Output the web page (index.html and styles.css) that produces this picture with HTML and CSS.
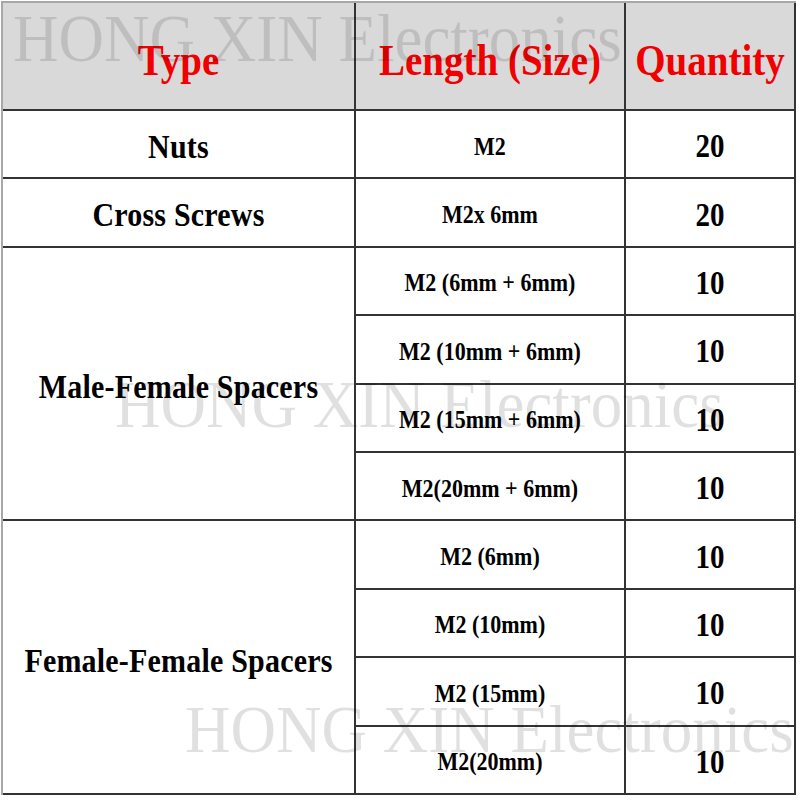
FILE: index.html
```html
<!DOCTYPE html>
<html>
<head>
<meta charset="utf-8">
<link rel="stylesheet" href="styles.css">
</head>
<body>
<div class="sheet">
  <div class="grid">
    <div class="cell head"><span class="t">Type</span></div>
    <div class="cell head"><span class="t">Length (Size)</span></div>
    <div class="cell head"><span class="t">Quantity</span></div>

    <div class="cell type"><span class="t">Nuts</span></div>
    <div class="cell len"><span class="t">M2</span></div>
    <div class="cell qty"><span class="t">20</span></div>

    <div class="cell type"><span class="t">Cross Screws</span></div>
    <div class="cell len"><span class="t">M2x 6mm</span></div>
    <div class="cell qty"><span class="t">20</span></div>

    <div class="cell type span4"><span class="t">Male-Female Spacers</span></div>
    <div class="cell len"><span class="t">M2 (6mm + 6mm)</span></div>
    <div class="cell qty"><span class="t">10</span></div>
    <div class="cell len"><span class="t">M2 (10mm + 6mm)</span></div>
    <div class="cell qty"><span class="t">10</span></div>
    <div class="cell len"><span class="t">M2 (15mm + 6mm)</span></div>
    <div class="cell qty"><span class="t">10</span></div>
    <div class="cell len"><span class="t">M2(20mm + 6mm)</span></div>
    <div class="cell qty"><span class="t">10</span></div>

    <div class="cell type span4"><span class="t">Female-Female Spacers</span></div>
    <div class="cell len"><span class="t">M2 (6mm)</span></div>
    <div class="cell qty"><span class="t">10</span></div>
    <div class="cell len"><span class="t">M2 (10mm)</span></div>
    <div class="cell qty"><span class="t">10</span></div>
    <div class="cell len"><span class="t">M2 (15mm)</span></div>
    <div class="cell qty"><span class="t">10</span></div>
    <div class="cell len"><span class="t">M2(20mm)</span></div>
    <div class="cell qty"><span class="t">10</span></div>
  </div>
  <div class="wm wm1">HONG XIN Electronics</div>
  <div class="wm wm2">HONG XIN Electronics</div>
  <div class="wm wm3">HONG XIN Electronics</div>
</div>
</body>
</html>
```

FILE: styles.css
```css
html, body {
  margin: 0;
  padding: 0;
  background: #ffffff;
}
body {
  width: 800px;
  height: 800px;
  overflow: hidden;
  font-family: "Liberation Serif", "Times New Roman", serif;
}
.sheet {
  position: relative;
  width: 800px;
  height: 800px;
  padding: 1px 0 0 1px;
  box-sizing: border-box;
}
.grid {
  display: grid;
  grid-template-columns: 353px 270px 170px;
  grid-template-rows: 108px repeat(10, 68.4px);
  width: 795px;
  border-left: 2px solid #a8a8a8;
  border-top: 2px solid #a8a8a8;
  box-sizing: border-box;
}
.cell {
  box-sizing: border-box;
  border-right: 2px solid #333333;
  border-bottom: 2px solid #333333;
  display: flex;
  align-items: center;
  justify-content: center;
  padding-top: 5px;
  font-weight: bold;
  color: #000000;
  white-space: nowrap;
}
.t {
  display: inline-block;
  transform: scaleY(1.15);
}
.head {
  background: #d9d9d9;
  color: #f00000;
  font-size: 39px;
  padding-top: 7px;
}
.type {
  font-size: 30px;
  letter-spacing: 0.2px;
}
.len {
  font-size: 22px;
}
.qty {
  font-size: 29px;
}
.span4 {
  grid-row: span 4;
}
.wm {
  position: absolute;
  font-family: "Liberation Serif", "Times New Roman", serif;
  font-size: 63px;
  line-height: 63px;
  color: rgba(0, 0, 0, 0.12);
  white-space: nowrap;
  pointer-events: none;
  transform: scaleY(1.08);
  transform-origin: 0 84%;
}
.wm1 { left: 13px; top: 9px; }
.wm2 { left: 115px; top: 375px; }
.wm3 { left: 185px; top: 700px; }
```
